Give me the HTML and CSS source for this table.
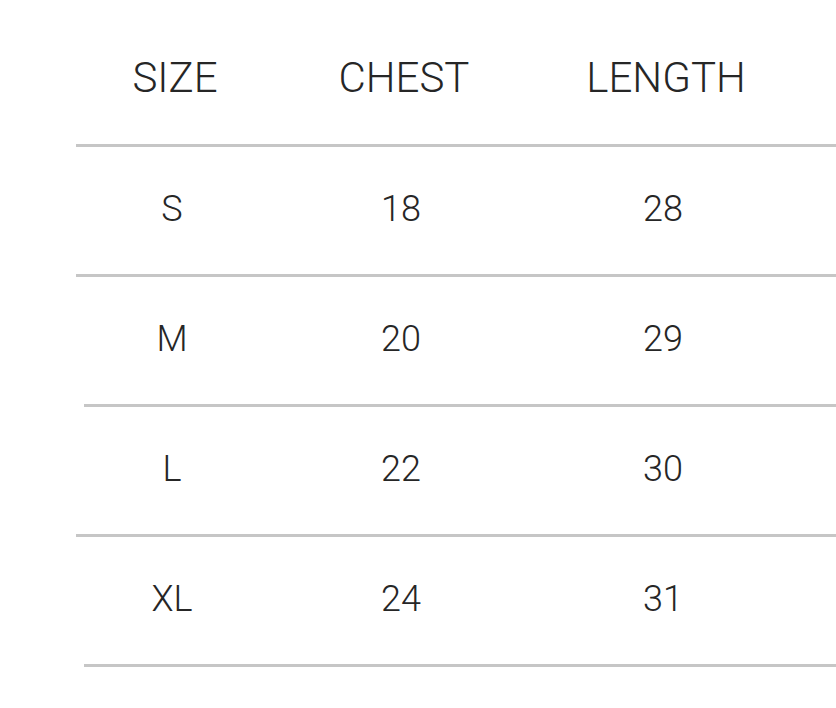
FILE: index.html
```html
<!DOCTYPE html>
<html>
<head>
<meta charset="utf-8">
<link rel="stylesheet" href="styles.css">
</head>
<body>
<div class="chart">
  <div class="row row--head">
    <div class="cell">SIZE</div>
    <div class="cell">CHEST</div>
    <div class="cell">LENGTH</div>
  </div>
  <div class="rule"></div>
  <div class="row">
    <div class="cell">S</div>
    <div class="cell">18</div>
    <div class="cell">28</div>
  </div>
  <div class="rule"></div>
  <div class="row">
    <div class="cell">M</div>
    <div class="cell">20</div>
    <div class="cell">29</div>
  </div>
  <div class="rule rule--inset"></div>
  <div class="row">
    <div class="cell">L</div>
    <div class="cell">22</div>
    <div class="cell">30</div>
  </div>
  <div class="rule"></div>
  <div class="row">
    <div class="cell">XL</div>
    <div class="cell">24</div>
    <div class="cell">31</div>
  </div>
  <div class="rule rule--inset"></div>
</div>
</body>
</html>
```
FILE: styles.css
```css
html, body {
  margin: 0;
  padding: 0;
  background: #ffffff;
}

body {
  font-family: Roboto, "Liberation Sans", sans-serif;
  font-weight: 300;
  color: #262626;
  width: 836px;
  height: 708px;
  overflow: hidden;
}

.chart {
  display: flex;
  flex-direction: column;
}

.row {
  display: grid;
  grid-template-columns: 198px 260px 264px 1fr;
  margin-left: 76px;
  height: 127px;
  align-items: center;
  font-size: 36px;
  line-height: 1;
}

.row--head {
  height: 132px;
  padding-top: 12px;
  font-size: 42px;
}

.cell {
  text-align: center;
  padding-bottom: 4px;
  padding-right: 6px;
}

.row--head .cell {
  padding-right: 0;
  padding-bottom: 1px;
}

.rule {
  height: 3px;
  background: #c6c6c6;
  margin-left: 76px;
}

.rule--inset {
  margin-left: 84px;
}
```
